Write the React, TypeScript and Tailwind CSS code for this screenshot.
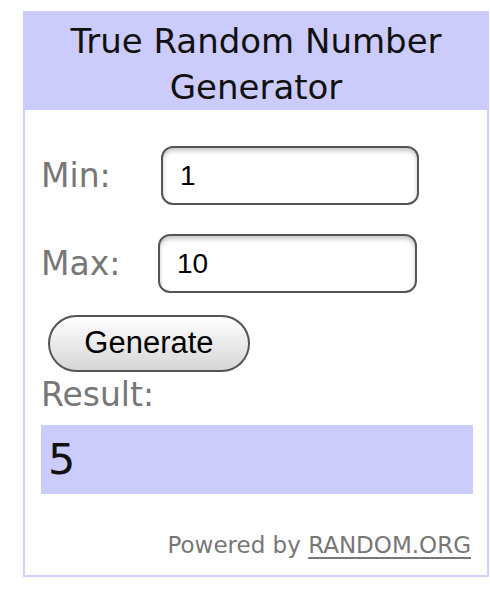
export default function App() {
  const sans = "font-['DejaVu_Sans',sans-serif]"
  const arial = "font-['Liberation_Sans',Arial,sans-serif]"

  return (
    <div className="w-[490px] h-[601px] bg-white pl-[23px] pt-[11px]">
      {/* Widget box */}
      <div className="w-[466px] h-[566px] border-2 border-[#d2d2f8] flex flex-col">
        {/* Header */}
        <div
          className={`-mx-[2px] -mt-[2px] h-[99px] bg-[#ccccfc] pt-[7px] text-center text-[34px] leading-[46px] text-[#111] ${sans}`}
        >
          True Random Number
          <br />
          Generator
        </div>

        {/* Body */}
        <div className="flex flex-col pl-[16px] pr-[14px]">
          <div className="mt-[36px] flex items-center h-[59px]">
            <span className={`w-[120px] text-[33px] text-[#777] ${sans}`}>Min:</span>
            <div
              className={`w-[258px] h-[59px] rounded-[12px] border-2 border-[#555] bg-white shadow-[inset_0_3px_4px_rgba(0,0,0,0.22)] flex items-center pl-[17px] text-[28px] text-black ${arial}`}
            >
              1
            </div>
          </div>

          <div className="mt-[29px] flex items-center h-[59px]">
            <span className={`w-[117px] text-[33px] text-[#777] ${sans}`}>Max:</span>
            <div
              className={`w-[259px] h-[59px] rounded-[12px] border-2 border-[#555] bg-white shadow-[inset_0_3px_4px_rgba(0,0,0,0.22)] flex items-center pl-[17px] text-[28px] text-black ${arial}`}
            >
              10
            </div>
          </div>

          <div className="mt-[22px] ml-[7px]">
            <button
              className={`w-[202px] h-[57px] rounded-full border-2 border-[#555] bg-gradient-to-b from-white to-[#d6d6d6] text-[31px] text-black ${arial}`}
            >
              Generate
            </button>
          </div>

          <div className={`mt-[4px] h-[38px] leading-[38px] text-[33px] text-[#777] ${sans}`}>Result:</div>

          <div
            className={`mt-[11px] h-[69px] bg-[#ccccfc] pl-[7px] flex items-center text-[43px] text-[#111] ${sans}`}
          >
            5
          </div>

          <div className={`mt-[38px] text-right pr-[2px] text-[23px] leading-[27px] text-[#777] ${sans}`}>
            Powered by <span className="underline underline-offset-[4px]">RANDOM.ORG</span>
          </div>
        </div>
      </div>
    </div>
  )
}
